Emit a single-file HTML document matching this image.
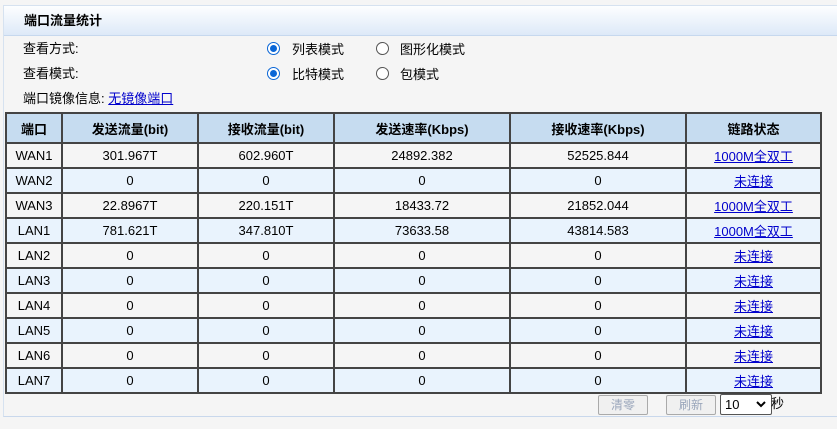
<!DOCTYPE html>
<html><head><meta charset="utf-8"><style>
body{margin:0;width:837px;height:429px;background:#f5f5f5;font-family:"Liberation Sans","Noto Sans CJK SC",sans-serif;font-size:13px;color:#000;overflow:hidden;position:relative}
.panel{position:absolute;left:3px;top:5px;width:840px;height:410px;border-top:1px solid #d6e2f0;border-left:1px solid #d6e2f0;border-bottom:1px solid #c9d8ec;background:#f5f5f5}
.hd{height:29px;border-bottom:1px solid #c6d8ee;background:linear-gradient(#fdfeff,#dde9f8);font-weight:bold;line-height:29px;padding-left:20px}
.line{position:absolute;left:20px;height:20px;line-height:20px}
.r{position:absolute;height:20px;line-height:20px}
.rad{position:absolute;width:13px;height:13px;border-radius:50%;border:1px solid #555;background:#fff;box-sizing:border-box}
.rad.on{border:1px solid #0a66d6;}
.rad.on::after{content:"";position:absolute;left:2px;top:2px;width:7px;height:7px;border-radius:50%;background:#0a66d6}
a{color:#0000cc;text-decoration:underline}
table{position:absolute;left:5px;top:112px;border-collapse:collapse;width:817px}
td,th{border:2px solid #444;text-align:center;height:23px;padding:0;font-size:13px}
th{background:#c6dcf0;height:28px;font-weight:bold}
tr:nth-child(even) td{background:#f5f5f5}
tr:nth-child(odd) td{background:#e9f3fd}
.btn{position:absolute;top:395px;height:18px;border:1px solid #aaa;border-radius:2px;background:#f0f0f0;color:#9aa6bb;font-size:12px;text-align:center;line-height:18px}
</style></head><body>
<div class="panel"><div class="hd">端口流量统计</div></div>
<div class="line" style="top:39px;left:23px">查看方式:</div>
<div class="line" style="top:64px;left:23px">查看模式:</div>
<div class="line" style="top:89px;left:23px">端口镜像信息: <a>无镜像端口</a></div>
<div class="rad on" style="left:267px;top:42px"></div><div class="r" style="left:292px;top:40px">列表模式</div>
<div class="rad" style="left:376px;top:42px"></div><div class="r" style="left:400px;top:40px">图形化模式</div>
<div class="rad on" style="left:267px;top:67px"></div><div class="r" style="left:292px;top:65px">比特模式</div>
<div class="rad" style="left:376px;top:67px"></div><div class="r" style="left:400px;top:65px">包模式</div>
<table>
<tr><th style="width:54px">端口</th><th style="width:134px">发送流量(bit)</th><th style="width:134px">接收流量(bit)</th><th style="width:174px">发送速率(Kbps)</th><th style="width:174px">接收速率(Kbps)</th><th>链路状态</th></tr>
<tr><td>WAN1</td><td>301.967T</td><td>602.960T</td><td>24892.382</td><td>52525.844</td><td><a>1000M全双工</a></td></tr>
<tr><td>WAN2</td><td>0</td><td>0</td><td>0</td><td>0</td><td><a>未连接</a></td></tr>
<tr><td>WAN3</td><td>22.8967T</td><td>220.151T</td><td>18433.72</td><td>21852.044</td><td><a>1000M全双工</a></td></tr>
<tr><td>LAN1</td><td>781.621T</td><td>347.810T</td><td>73633.58</td><td>43814.583</td><td><a>1000M全双工</a></td></tr>
<tr><td>LAN2</td><td>0</td><td>0</td><td>0</td><td>0</td><td><a>未连接</a></td></tr>
<tr><td>LAN3</td><td>0</td><td>0</td><td>0</td><td>0</td><td><a>未连接</a></td></tr>
<tr><td>LAN4</td><td>0</td><td>0</td><td>0</td><td>0</td><td><a>未连接</a></td></tr>
<tr><td>LAN5</td><td>0</td><td>0</td><td>0</td><td>0</td><td><a>未连接</a></td></tr>
<tr><td>LAN6</td><td>0</td><td>0</td><td>0</td><td>0</td><td><a>未连接</a></td></tr>
<tr><td>LAN7</td><td>0</td><td>0</td><td>0</td><td>0</td><td><a>未连接</a></td></tr>
</table>
<div class="btn" style="left:598px;width:48px">清零</div>
<div class="btn" style="left:666px;width:48px">刷新</div>
<div style="position:absolute;left:720px;top:394px;width:46px;height:19px;border:1px solid #555;border-radius:2px;background:#fff;font-size:13px;line-height:19px;padding-left:4px">10<svg style="position:absolute;right:5px;top:6px" width="10" height="7" viewBox="0 0 10 7"><path d="M1 1L5 5L9 1" fill="none" stroke="#000" stroke-width="2"/></svg></div>
<div style="position:absolute;left:771px;top:395px;line-height:18px">秒</div>
</body></html>
